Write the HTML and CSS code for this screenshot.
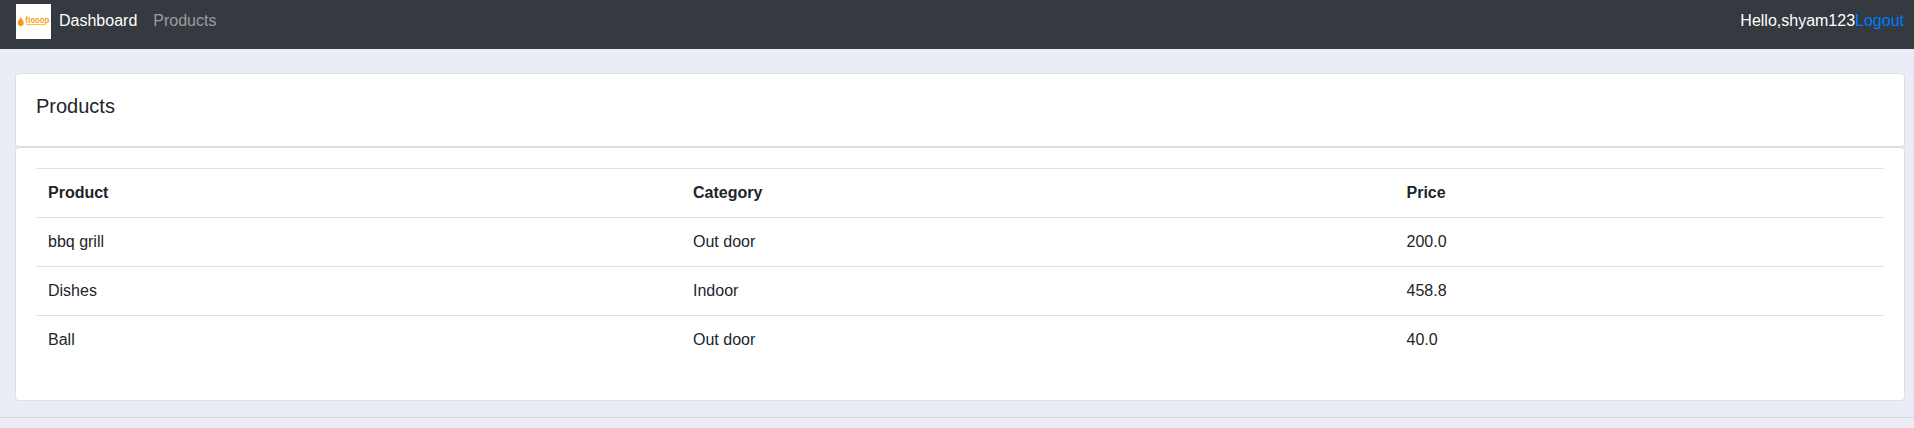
FILE: index.html
```html
<!DOCTYPE html>
<html lang="en">
<head>
<meta charset="utf-8">
<title>Products</title>
<link rel="stylesheet" href="styles.css">
</head>
<body>
<nav class="navbar">
  <svg class="logo" viewBox="0 0 35 35" role="img" aria-label="flooop">
    <rect width="35" height="35" fill="#fff"/>
    <path d="M4.700 12.800C5.500 15.200 7.700 16.600 7.700 18.900a3 3 0 0 1-6 0C1.700 16.600 4 15.500 4.700 12.800z" fill="#fb941c"/>
    <text class="logo-text" x="9.300" y="19" textLength="24" lengthAdjust="spacingAndGlyphs">flooop</text>
    <rect x="10" y="20" width="20" height="1" fill="#fcc62e"/>
  </svg>
  <a class="nav-link active" href="#">Dashboard</a>
  <a class="nav-link" href="#">Products</a>
  <div class="account"><span>Hello,shyam123</span><a class="logout" href="#">Logout</a></div>
</nav>
<main class="content">
  <section class="card"><h5 class="card-title">Products</h5></section>
  <section class="card">
    <table class="table">
      <colgroup><col class="col-product"><col class="col-category"><col></colgroup>
      <tr><th>Product</th><th>Category</th><th>Price</th></tr>
      <tr><td>bbq grill</td><td>Out door</td><td>200.0</td></tr>
      <tr><td>Dishes</td><td>Indoor</td><td>458.8</td></tr>
      <tr><td>Ball</td><td>Out door</td><td>40.0</td></tr>
    </table>
  </section>
</main>
<hr class="divider">
</body>
</html>
```
FILE: styles.css
```css
*, *::before, *::after { box-sizing: border-box; }
body {
  margin: 0;
  background: #eaedf5;
  color: #212529;
  font: 16px/24px "Liberation Sans", Arial, sans-serif;
}
a { text-decoration: none; }
.navbar {
  display: flex;
  align-items: flex-start;
  height: 49px;
  padding: 4px 10px 0 16px;
  background: #343a40;
}
.logo { display: block; width: 35px; height: 35px; }
.logo-text { font: bold 7.5px Inter, sans-serif; font-variant-ligatures: none; fill: #fb9f1c; }
.nav-link { padding: 5px 8px; color: rgba(255, 255, 255, .5); }
.nav-link.active { color: #fff; }
.account { margin-left: auto; padding-top: 5px; color: #fff; }
.logout { color: #007bff; }
.content { padding: 24px 9px 0 15px; }
.card {
  padding: 20px;
  background: #fff;
  border: 1px solid rgba(0, 0, 0, .125);
  border-radius: 4px;
}
.card-title { margin: 0 0 8px; font-size: 20px; font-weight: 400; line-height: 24px; }
.table { width: 100%; margin-bottom: 16px; border-collapse: separate; border-spacing: 0; table-layout: fixed; }
.col-product { width: 645px; }
.col-category { width: 713.500px; }
.table th, .table td { padding: 12px; border-top: 1px solid #dee2e6; text-align: left; }
.divider { margin: 16px 0; border: 0; border-top: 1px solid rgba(0, 0, 0, .1); }
```
